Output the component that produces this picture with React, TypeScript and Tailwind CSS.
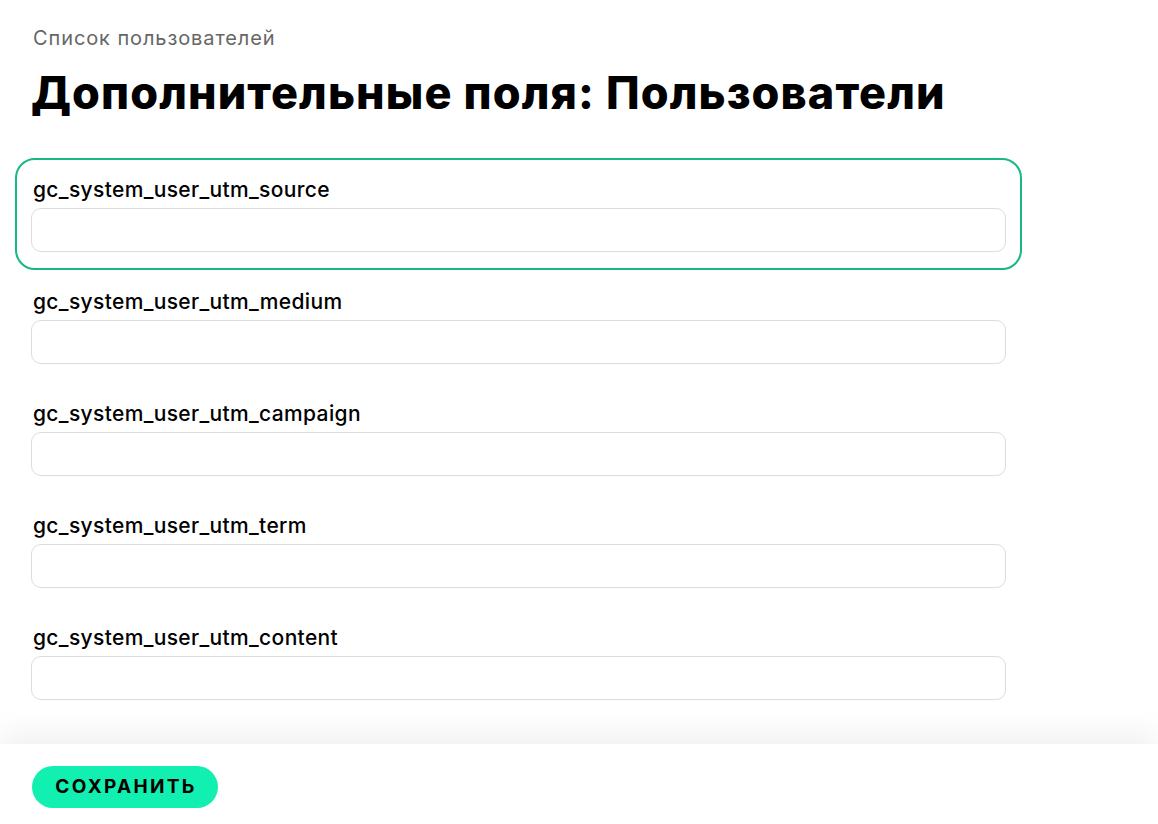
import React from "react";

const fields = [
  "gc_system_user_utm_source",
  "gc_system_user_utm_medium",
  "gc_system_user_utm_campaign",
  "gc_system_user_utm_term",
  "gc_system_user_utm_content",
];

export default function App() {
  return (
    <div
      className="h-screen flex flex-col bg-white text-black overflow-hidden"
      style={{ fontFamily: "Inter, 'Noto Sans', sans-serif" }}
    >
      <main className="flex-1 overflow-hidden">
        <div className="pl-[33px] pt-[25px] text-[20px] leading-[27px] tracking-[0.9px] text-[#666666]">
          Список пользователей
        </div>
        <h1 className="pl-[31px] pt-[13px] text-[45px] leading-[56px] font-extrabold tracking-[1.1px]">
          Дополнительные поля: Пользователи
        </h1>
        <div className="mt-[37px] ml-[15px] w-[1007px] flex flex-col">
          {fields.map((f, i) => (
            <div
              key={f}
              className={
                i === 0
                  ? "h-[112px] rounded-[20px] border-2 border-[#19b783] px-[14px] pt-[16px] flex flex-col"
                  : "h-[112px] rounded-[20px] border-2 border-transparent px-[14px] pt-[16px] flex flex-col"
              }
            >
              <label className="pl-[2px] text-[21px] leading-[28px] font-medium tracking-[0.35px]">
                {f}
              </label>
              <input
                className="mt-[4px] h-[44px] w-full rounded-[10px] border border-[#dcdcdc] bg-white outline-none"
                type="text"
              />
            </div>
          ))}
        </div>
      </main>
      <footer className="relative z-10 h-[80px] shrink-0 bg-white pl-[32px] pt-[22px] shadow-[0_-12px_30px_rgba(0,0,0,0.06)]">
        <button className="h-[42px] w-[186px] rounded-full bg-[#11efb1] pl-[2px] text-[19px] font-bold tracking-[2.3px] text-black">
          СОХРАНИТЬ
        </button>
      </footer>
    </div>
  );
}
